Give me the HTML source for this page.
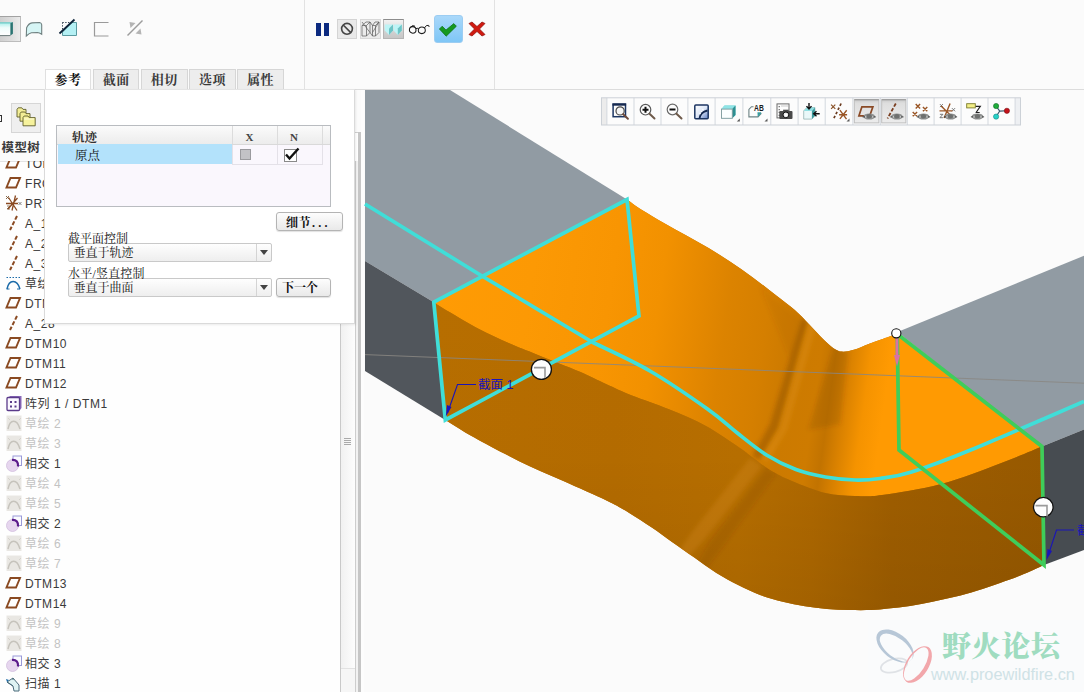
<!DOCTYPE html>
<html lang="zh-CN"><head><meta charset="utf-8"><title>扫描 - 参考</title>
<style>
html,body{margin:0;padding:0;}
body{width:1084px;height:692px;overflow:hidden;position:relative;background:#fbfbfb;font-family:"Liberation Sans","Noto Sans CJK SC",sans-serif;}
#page{position:absolute;left:0;top:0;width:1084px;height:692px;overflow:hidden;background:#fbfbfb;}
#scene{position:absolute;left:0;top:0;}
#topbar{position:absolute;left:0;top:0;width:1084px;height:89px;background:#fbfbfb;border-bottom:1px solid #dcdcdc;}
.vsep{position:absolute;top:0;width:1px;height:89px;background:#e2e2e2;}
.abs{position:absolute;}
/* left tree */
#left{position:absolute;left:0;top:90px;width:364px;height:602px;background:#fbfbfb;overflow:hidden;}
#treebg{position:absolute;left:0;top:71px;width:340px;height:531px;background:#fefefe;border-top:1px solid #e4e4e4;}
.tr{position:absolute;left:5px;height:20px;white-space:nowrap;font-size:12px;color:#3a3a3a;line-height:20px;}
.tr svg{position:absolute;left:0;top:1.5px;}
.tr span{position:absolute;left:20px;top:0;letter-spacing:0.55px;}
.tr.g{color:#c3c3c3;}
#left .tr{top:0;}
/* dashboard slide-down panel */
.tab{position:absolute;top:69px;height:20px;width:44.6px;background:#ededed;border:1px solid #d6d6d6;border-bottom:none;font-family:"Liberation Serif","Noto Serif CJK SC",serif;font-weight:bold;font-size:13px;line-height:20px;text-align:center;color:#3a3a3a;letter-spacing:0.5px;}
.tab.on{background:#fff;color:#111;border-color:#e0e0e0;height:21px;}
#panel{position:absolute;left:44px;top:89px;width:309px;height:233px;background:#fff;border:1px solid #dadada;border-top:1px solid #e4e4e4;box-shadow:1px 1px 2px rgba(0,0,0,0.08);font-family:"Liberation Serif","Noto Serif CJK SC",serif;font-size:12px;color:#111;}
#tbl{position:absolute;left:11px;top:35px;width:273px;height:80px;background:#faf7fd;border:1px solid #b9bcc0;}
#thead{position:absolute;left:0;top:0;width:273px;height:18px;background:linear-gradient(#fbfbfb,#ececec);border-bottom:1px solid #d9d9d9;}
.btn{position:absolute;border:1px solid #b4b4b4;border-radius:3px;background:linear-gradient(#fdfdfd,#e9e9e9);font-weight:bold;font-size:12px;text-align:center;box-shadow:0 1px 1px rgba(0,0,0,0.12);}
.dd{position:absolute;left:23px;width:202px;height:17px;border:1px solid #c9c9c9;border-radius:2px;background:linear-gradient(#fefefe,#eeeeee);font-size:12px;line-height:18px;}
.dd i{position:absolute;right:0;top:0;width:14px;height:17px;border-left:1px solid #d4d4d4;}
.dd i:after{content:"";position:absolute;left:3px;top:6px;border:4px solid transparent;border-top:5.5px solid #444;}
/* view toolbar */
#vtb{position:absolute;left:600.5px;top:96.5px;}
</style></head><body><div id="page">

<svg id="scene" width="1084" height="692" viewBox="0 0 1084 692">
<defs>
<linearGradient id="gTop" gradientUnits="userSpaceOnUse" x1="434" y1="302" x2="1049.8" y2="389.1">
<stop offset="0" stop-color="#ff9b04"/><stop offset="0.15" stop-color="#fc9904"/><stop offset="0.278" stop-color="#f89502"/><stop offset="0.358" stop-color="#f29100"/><stop offset="0.421" stop-color="#e68900"/>
<stop offset="0.469" stop-color="#dc8300"/><stop offset="0.533" stop-color="#d57f00"/><stop offset="0.58" stop-color="#cc7a00"/><stop offset="0.628" stop-color="#ce7b00"/><stop offset="0.652" stop-color="#c27300"/><stop offset="0.676" stop-color="#d98100"/><stop offset="0.708" stop-color="#f59300"/><stop offset="0.74" stop-color="#ff9a02"/><stop offset="1" stop-color="#ff9a02"/>
</linearGradient>
<filter id="blur2" x="-20%" y="-20%" width="140%" height="140%"><feGaussianBlur stdDeviation="2.2"/></filter>
<clipPath id="clipTop"><path d="M433.8,302.2L627.0,199.5C629.5,201.2 635.8,206.1 642.0,210.0 C648.2,213.9 656.9,219.0 664.3,223.2 C671.7,227.4 679.0,231.3 686.4,235.4 C693.8,239.5 701.2,243.6 708.6,248.0 C716.0,252.4 723.3,257.1 730.7,262.0 C738.1,266.9 745.4,272.0 752.8,277.4 C760.2,282.8 768.0,289.1 775.0,294.5 C782.0,299.9 789.0,305.0 794.8,310.0 C800.5,315.0 804.6,319.7 809.5,324.7 C814.4,329.7 819.9,336.0 824.3,340.2 C828.7,344.4 832.8,347.9 836.0,349.8 C839.2,351.7 840.5,351.7 843.5,351.7 C846.5,351.7 849.6,351.1 853.8,349.8 C858.0,348.5 863.7,345.8 868.6,343.9 C873.5,342.0 878.6,340.3 883.3,338.7 C887.9,337.1 894.3,334.8 896.5,334.0L900.0,336.0L1042.0,446.5C1035.0,449.3 1016.8,457.2 1000.0,463.5 C983.2,469.8 960.7,478.8 941.0,484.0 C921.3,489.2 896.3,493.0 882.0,495.0 C867.7,497.0 864.4,496.3 855.0,496.0 C845.6,495.7 836.0,495.5 825.5,493.0 C815.0,490.5 801.2,484.8 792.0,481.0 C782.8,477.2 776.7,474.0 770.0,470.0 C763.3,466.0 757.0,460.7 752.0,457.0 C747.0,453.3 747.7,453.2 740.0,448.0 C732.3,442.8 717.8,432.4 706.0,426.0 C694.2,419.6 681.3,414.4 669.0,409.3 C656.7,404.2 642.5,399.7 632.0,395.5 C621.5,391.3 614.7,387.9 606.0,384.0 C597.3,380.1 591.3,376.6 580.0,371.8 C568.7,367.0 549.9,359.8 538.0,355.0 C526.1,350.2 518.4,347.4 508.6,343.1 C498.8,338.8 488.9,334.3 479.0,329.1 C469.1,323.9 457.0,316.6 449.5,312.1 C442.0,307.6 436.4,303.9 433.8,302.2Z"/></clipPath>
<clipPath id="clipFront"><path d="M433.8,302.2C436.4,303.9 442.0,307.6 449.5,312.1 C457.0,316.6 469.1,323.9 479.0,329.1 C488.9,334.3 498.8,338.8 508.6,343.1 C518.4,347.4 526.1,350.2 538.0,355.0 C549.9,359.8 568.7,367.0 580.0,371.8 C591.3,376.6 597.3,380.1 606.0,384.0 C614.7,387.9 621.5,391.3 632.0,395.5 C642.5,399.7 656.7,404.2 669.0,409.3 C681.3,414.4 694.2,419.6 706.0,426.0 C717.8,432.4 732.3,442.8 740.0,448.0 C747.7,453.2 747.0,453.3 752.0,457.0 C757.0,460.7 763.3,466.0 770.0,470.0 C776.7,474.0 782.8,477.2 792.0,481.0 C801.2,484.8 815.0,490.5 825.5,493.0 C836.0,495.5 845.6,495.7 855.0,496.0 C864.4,496.3 867.7,497.0 882.0,495.0 C896.3,493.0 921.3,489.2 941.0,484.0 C960.7,478.8 983.2,469.8 1000.0,463.5 C1016.8,457.2 1035.0,449.3 1042.0,446.5L1044.0,565.0C1040.2,566.7 1028.3,572.3 1021.0,575.3 C1013.7,578.3 1007.4,580.4 1000.0,583.0 C992.6,585.6 984.3,588.5 976.8,590.8 C969.3,593.1 962.4,595.0 955.0,596.8 C947.6,598.6 940.0,600.3 932.5,601.8 C925.0,603.3 917.4,604.9 910.0,606.0 C902.6,607.1 894.7,607.8 888.3,608.5 C881.9,609.2 877.9,609.8 871.4,610.0 C864.9,610.2 856.6,610.2 849.2,610.0 C841.8,609.8 834.4,609.6 827.0,609.0 C819.6,608.4 812.4,607.5 805.0,606.3 C797.6,605.1 790.2,603.6 782.8,601.8 C775.4,599.9 768.1,598.0 760.7,595.2 C753.3,592.4 746.0,588.9 738.6,585.2 C731.2,581.5 723.8,577.6 716.4,573.0 C709.0,568.4 701.7,562.8 694.3,557.6 C686.9,552.4 679.1,547.0 672.0,542.0 C664.9,537.0 658.5,532.1 651.4,527.3 C644.3,522.4 636.6,517.3 629.2,512.9 C621.8,508.5 618.1,506.0 607.0,500.7 C595.9,495.4 577.5,487.4 562.8,480.8 C548.1,474.2 533.4,468.1 518.6,460.9 C503.9,453.7 486.5,444.4 474.3,437.6 C462.1,430.8 450.1,422.9 445.3,420.0Z"/></clipPath>
<linearGradient id="gFront" gradientUnits="userSpaceOnUse" x1="430" y1="0" x2="1045" y2="0">
<stop offset="0" stop-color="#b76e00"/><stop offset="0.30" stop-color="#b56c00"/><stop offset="0.50" stop-color="#b86f00"/><stop offset="0.62" stop-color="#b06900"/><stop offset="0.75" stop-color="#a15f00"/><stop offset="1" stop-color="#995a00"/>
</linearGradient>
<linearGradient id="gFrontV" gradientUnits="userSpaceOnUse" x1="0" y1="300" x2="0" y2="610">
<stop offset="0" stop-color="#000" stop-opacity="0"/><stop offset="0.5" stop-color="#000" stop-opacity="0.01"/><stop offset="1" stop-color="#000" stop-opacity="0.08"/>
</linearGradient>
</defs>
<!-- grey block, left -->
<path d="M365,90 L450,90 L627,199.5 L433.8,302.2 L365,261 Z" fill="#919ba3"/>
<path d="M365,261 L433.8,302.2 L445.3,420 L365,371 Z" fill="#51565c"/>
<!-- grey block, right -->
<path d="M897.5,332 L1084,255.8 L1084,429.5 L1042,446.5 Z" fill="#919ba3"/>
<path d="M1042,446.5 L1084,429.5 L1084,550 L1044,565 Z" fill="#474c51"/>
<!-- swept body -->
<path d="M433.8,302.2L627.0,199.5C629.5,201.2 635.8,206.1 642.0,210.0 C648.2,213.9 656.9,219.0 664.3,223.2 C671.7,227.4 679.0,231.3 686.4,235.4 C693.8,239.5 701.2,243.6 708.6,248.0 C716.0,252.4 723.3,257.1 730.7,262.0 C738.1,266.9 745.4,272.0 752.8,277.4 C760.2,282.8 768.0,289.1 775.0,294.5 C782.0,299.9 789.0,305.0 794.8,310.0 C800.5,315.0 804.6,319.7 809.5,324.7 C814.4,329.7 819.9,336.0 824.3,340.2 C828.7,344.4 832.8,347.9 836.0,349.8 C839.2,351.7 840.5,351.7 843.5,351.7 C846.5,351.7 849.6,351.1 853.8,349.8 C858.0,348.5 863.7,345.8 868.6,343.9 C873.5,342.0 878.6,340.3 883.3,338.7 C887.9,337.1 894.3,334.8 896.5,334.0L900.0,336.0L1042.0,446.5L1044.0,565.0C1040.2,566.7 1028.3,572.3 1021.0,575.3 C1013.7,578.3 1007.4,580.4 1000.0,583.0 C992.6,585.6 984.3,588.5 976.8,590.8 C969.3,593.1 962.4,595.0 955.0,596.8 C947.6,598.6 940.0,600.3 932.5,601.8 C925.0,603.3 917.4,604.9 910.0,606.0 C902.6,607.1 894.7,607.8 888.3,608.5 C881.9,609.2 877.9,609.8 871.4,610.0 C864.9,610.2 856.6,610.2 849.2,610.0 C841.8,609.8 834.4,609.6 827.0,609.0 C819.6,608.4 812.4,607.5 805.0,606.3 C797.6,605.1 790.2,603.6 782.8,601.8 C775.4,599.9 768.1,598.0 760.7,595.2 C753.3,592.4 746.0,588.9 738.6,585.2 C731.2,581.5 723.8,577.6 716.4,573.0 C709.0,568.4 701.7,562.8 694.3,557.6 C686.9,552.4 679.1,547.0 672.0,542.0 C664.9,537.0 658.5,532.1 651.4,527.3 C644.3,522.4 636.6,517.3 629.2,512.9 C621.8,508.5 618.1,506.0 607.0,500.7 C595.9,495.4 577.5,487.4 562.8,480.8 C548.1,474.2 533.4,468.1 518.6,460.9 C503.9,453.7 486.5,444.4 474.3,437.6 C462.1,430.8 450.1,422.9 445.3,420.0Z" fill="#c47400"/>
<path d="M433.8,302.2L627.0,199.5C629.5,201.2 635.8,206.1 642.0,210.0 C648.2,213.9 656.9,219.0 664.3,223.2 C671.7,227.4 679.0,231.3 686.4,235.4 C693.8,239.5 701.2,243.6 708.6,248.0 C716.0,252.4 723.3,257.1 730.7,262.0 C738.1,266.9 745.4,272.0 752.8,277.4 C760.2,282.8 768.0,289.1 775.0,294.5 C782.0,299.9 789.0,305.0 794.8,310.0 C800.5,315.0 804.6,319.7 809.5,324.7 C814.4,329.7 819.9,336.0 824.3,340.2 C828.7,344.4 832.8,347.9 836.0,349.8 C839.2,351.7 840.5,351.7 843.5,351.7 C846.5,351.7 849.6,351.1 853.8,349.8 C858.0,348.5 863.7,345.8 868.6,343.9 C873.5,342.0 878.6,340.3 883.3,338.7 C887.9,337.1 894.3,334.8 896.5,334.0L900.0,336.0L1042.0,446.5C1035.0,449.3 1016.8,457.2 1000.0,463.5 C983.2,469.8 960.7,478.8 941.0,484.0 C921.3,489.2 896.3,493.0 882.0,495.0 C867.7,497.0 864.4,496.3 855.0,496.0 C845.6,495.7 836.0,495.5 825.5,493.0 C815.0,490.5 801.2,484.8 792.0,481.0 C782.8,477.2 776.7,474.0 770.0,470.0 C763.3,466.0 757.0,460.7 752.0,457.0 C747.0,453.3 747.7,453.2 740.0,448.0 C732.3,442.8 717.8,432.4 706.0,426.0 C694.2,419.6 681.3,414.4 669.0,409.3 C656.7,404.2 642.5,399.7 632.0,395.5 C621.5,391.3 614.7,387.9 606.0,384.0 C597.3,380.1 591.3,376.6 580.0,371.8 C568.7,367.0 549.9,359.8 538.0,355.0 C526.1,350.2 518.4,347.4 508.6,343.1 C498.8,338.8 488.9,334.3 479.0,329.1 C469.1,323.9 457.0,316.6 449.5,312.1 C442.0,307.6 436.4,303.9 433.8,302.2Z" fill="url(#gTop)"/>
<path d="M433.8,302.2C436.4,303.9 442.0,307.6 449.5,312.1 C457.0,316.6 469.1,323.9 479.0,329.1 C488.9,334.3 498.8,338.8 508.6,343.1 C518.4,347.4 526.1,350.2 538.0,355.0 C549.9,359.8 568.7,367.0 580.0,371.8 C591.3,376.6 597.3,380.1 606.0,384.0 C614.7,387.9 621.5,391.3 632.0,395.5 C642.5,399.7 656.7,404.2 669.0,409.3 C681.3,414.4 694.2,419.6 706.0,426.0 C717.8,432.4 732.3,442.8 740.0,448.0 C747.7,453.2 747.0,453.3 752.0,457.0 C757.0,460.7 763.3,466.0 770.0,470.0 C776.7,474.0 782.8,477.2 792.0,481.0 C801.2,484.8 815.0,490.5 825.5,493.0 C836.0,495.5 845.6,495.7 855.0,496.0 C864.4,496.3 867.7,497.0 882.0,495.0 C896.3,493.0 921.3,489.2 941.0,484.0 C960.7,478.8 983.2,469.8 1000.0,463.5 C1016.8,457.2 1035.0,449.3 1042.0,446.5L1044.0,565.0C1040.2,566.7 1028.3,572.3 1021.0,575.3 C1013.7,578.3 1007.4,580.4 1000.0,583.0 C992.6,585.6 984.3,588.5 976.8,590.8 C969.3,593.1 962.4,595.0 955.0,596.8 C947.6,598.6 940.0,600.3 932.5,601.8 C925.0,603.3 917.4,604.9 910.0,606.0 C902.6,607.1 894.7,607.8 888.3,608.5 C881.9,609.2 877.9,609.8 871.4,610.0 C864.9,610.2 856.6,610.2 849.2,610.0 C841.8,609.8 834.4,609.6 827.0,609.0 C819.6,608.4 812.4,607.5 805.0,606.3 C797.6,605.1 790.2,603.6 782.8,601.8 C775.4,599.9 768.1,598.0 760.7,595.2 C753.3,592.4 746.0,588.9 738.6,585.2 C731.2,581.5 723.8,577.6 716.4,573.0 C709.0,568.4 701.7,562.8 694.3,557.6 C686.9,552.4 679.1,547.0 672.0,542.0 C664.9,537.0 658.5,532.1 651.4,527.3 C644.3,522.4 636.6,517.3 629.2,512.9 C621.8,508.5 618.1,506.0 607.0,500.7 C595.9,495.4 577.5,487.4 562.8,480.8 C548.1,474.2 533.4,468.1 518.6,460.9 C503.9,453.7 486.5,444.4 474.3,437.6 C462.1,430.8 450.1,422.9 445.3,420.0Z" fill="url(#gFront)"/>
<path d="M433.8,302.2C436.4,303.9 442.0,307.6 449.5,312.1 C457.0,316.6 469.1,323.9 479.0,329.1 C488.9,334.3 498.8,338.8 508.6,343.1 C518.4,347.4 526.1,350.2 538.0,355.0 C549.9,359.8 568.7,367.0 580.0,371.8 C591.3,376.6 597.3,380.1 606.0,384.0 C614.7,387.9 621.5,391.3 632.0,395.5 C642.5,399.7 656.7,404.2 669.0,409.3 C681.3,414.4 694.2,419.6 706.0,426.0 C717.8,432.4 732.3,442.8 740.0,448.0 C747.7,453.2 747.0,453.3 752.0,457.0 C757.0,460.7 763.3,466.0 770.0,470.0 C776.7,474.0 782.8,477.2 792.0,481.0 C801.2,484.8 815.0,490.5 825.5,493.0 C836.0,495.5 845.6,495.7 855.0,496.0 C864.4,496.3 867.7,497.0 882.0,495.0 C896.3,493.0 921.3,489.2 941.0,484.0 C960.7,478.8 983.2,469.8 1000.0,463.5 C1016.8,457.2 1035.0,449.3 1042.0,446.5L1044.0,565.0C1040.2,566.7 1028.3,572.3 1021.0,575.3 C1013.7,578.3 1007.4,580.4 1000.0,583.0 C992.6,585.6 984.3,588.5 976.8,590.8 C969.3,593.1 962.4,595.0 955.0,596.8 C947.6,598.6 940.0,600.3 932.5,601.8 C925.0,603.3 917.4,604.9 910.0,606.0 C902.6,607.1 894.7,607.8 888.3,608.5 C881.9,609.2 877.9,609.8 871.4,610.0 C864.9,610.2 856.6,610.2 849.2,610.0 C841.8,609.8 834.4,609.6 827.0,609.0 C819.6,608.4 812.4,607.5 805.0,606.3 C797.6,605.1 790.2,603.6 782.8,601.8 C775.4,599.9 768.1,598.0 760.7,595.2 C753.3,592.4 746.0,588.9 738.6,585.2 C731.2,581.5 723.8,577.6 716.4,573.0 C709.0,568.4 701.7,562.8 694.3,557.6 C686.9,552.4 679.1,547.0 672.0,542.0 C664.9,537.0 658.5,532.1 651.4,527.3 C644.3,522.4 636.6,517.3 629.2,512.9 C621.8,508.5 618.1,506.0 607.0,500.7 C595.9,495.4 577.5,487.4 562.8,480.8 C548.1,474.2 533.4,468.1 518.6,460.9 C503.9,453.7 486.5,444.4 474.3,437.6 C462.1,430.8 450.1,422.9 445.3,420.0Z" fill="url(#gFrontV)"/>
<!-- crease shading -->
<g clip-path="url(#clipTop)"><g filter="url(#blur2)">
<path d="M802,318 L808,321 L778,428 L760,460 L752,456 L770,424 Z" fill="#6a3800" opacity="0.30"/>
<path d="M810,322 L816,326 L787,430 L768,462 L762,459 L780,428 Z" fill="#ffb648" opacity="0.14"/>
<path d="M834,346 L848,352 L840,424 L808,430 Z" fill="#6a3800" opacity="0.17"/>
<path d="M760,286 L800,318 L806,324 L790,360 Z" fill="#7a4200" opacity="0.08"/>
</g></g>
<g clip-path="url(#clipFront)"><g filter="url(#blur2)">
<path d="M750,458 L762,466 L704,540 L686,560 L678,552 L692,532 Z" fill="#ffb040" opacity="0.15"/>
<path d="M766,468 L776,474 L722,548 L704,572 L696,566 L710,542 Z" fill="#5a3000" opacity="0.13"/>
</g></g>
<!-- axis line -->
<path d="M365,354.6 L1084,383.2" stroke="#8a8782" stroke-width="1" fill="none" opacity="0.85"/>
<!-- trajectory & section 1 -->
<path d="M365.0,204.0L482.0,276.0L593.0,342.5C602.5,347.2 630.9,359.9 650.0,371.0 C669.1,382.1 693.0,398.7 707.5,409.0 C722.0,419.3 727.2,425.1 737.0,432.8 C746.8,440.5 756.7,448.9 766.5,455.0 C776.3,461.1 786.2,465.9 796.0,469.6 C805.8,473.3 815.7,475.3 825.5,477.0 C835.3,478.7 845.9,479.8 855.0,480.0 C864.1,480.2 870.6,479.8 880.0,478.5 C889.4,477.2 896.5,476.8 911.6,472.0 C926.7,467.2 941.9,461.8 970.6,450.0 C999.3,438.2 1065.1,409.6 1084.0,401.5" stroke="#40ded8" stroke-width="3.7" fill="none" stroke-linejoin="round"/>
<path d="M433.8,302.2L627.0,199.5L639.0,316.0L445.3,420.0Z" stroke="#40ded8" stroke-width="3.7" fill="none" stroke-linejoin="miter"/>
<!-- section 2 (green) -->
<path d="M897.3,338 L899,450 L1044,565 L1042,446.5 L899.8,336" stroke="#3fcd5a" stroke-width="3.7" fill="none" stroke-linejoin="miter"/>
<!-- start arrow -->
<path d="M897,338 L897,358" stroke="#d772a6" stroke-width="2.8" fill="none"/>
<path d="M894,355 L900,355 L897,366.5 Z" fill="#d772a6"/>
<circle cx="896.3" cy="333.3" r="4.6" fill="#fff" stroke="#111" stroke-width="1.1"/>
<!-- drag handles -->
<g><circle cx="541.4" cy="369.4" r="10" fill="#fdfdfd" stroke="#111" stroke-width="1.3"/><path d="M534,367.6 H545 V378" stroke="#9a9a9a" stroke-width="1.6" fill="none"/></g>
<g><circle cx="1043.3" cy="507.1" r="9.8" fill="#fdfdfd" stroke="#111" stroke-width="1.3"/><path d="M1035.5,505.6 H1047 V516.5" stroke="#9a9a9a" stroke-width="1.6" fill="none"/></g>
<!-- labels -->
<path d="M476,384.5 H457.5 L447.5,413" stroke="#1a14b8" stroke-width="1.1" fill="none"/>
<path d="M445.8,416.5 L447,405 L451.5,407 Z" fill="#1a14b8"/>
<text x="478" y="389" font-family="'Liberation Sans','Noto Sans CJK SC',sans-serif" font-size="12.5" fill="#1a14b8">截面 1</text>
<path d="M1074,530 H1056.5 L1048,556" stroke="#1a14b8" stroke-width="1.1" fill="none"/>
<path d="M1046.5,560 L1047.5,549 L1052,551 Z" fill="#1a14b8"/>
<text x="1077" y="535" font-family="'Liberation Sans','Noto Sans CJK SC',sans-serif" font-size="12.5" fill="#1a14b8">截面 2</text>
</svg>


<!-- ============ left model tree ============ -->
<div id="left">
 
 <div class="abs" style="left:-5px;top:25px;width:5px;height:5px;border:1.5px solid #333;"></div>
 <div class="abs" style="left:10.6px;top:13.3px;width:28.6px;height:27.5px;background:#efefef;border:1px solid #d6d6d6;"></div>
 <svg class="abs" style="left:14px;top:16px" width="24" height="24" viewBox="0 0 24 24">
  <path d="M3,3.4 l1.2,-1.6 h3.6 l1.2,1.6 h3 v7.6 h-9 Z" fill="#f3ee96" stroke="#5e5c2a" stroke-width="0.9"/>
  <path d="M6,7.6 l1.2,-1.6 h3.6 l1.2,1.6 h4 v7.6 h-10 Z" fill="#f3ee96" stroke="#5e5c2a" stroke-width="0.9"/>
  <path d="M9,11.6 l1.2,-1.6 h3.8 l1.2,1.6 h6 v8.2 h-12.2 Z" fill="#f6f29c" stroke="#5e5c2a" stroke-width="0.9"/>
  <path d="M10,13 h10" stroke="#fffff0" stroke-width="0.8"/>
 </svg>
 <div class="abs" style="left:1.5px;top:47.5px;font-family:'Liberation Sans','Noto Sans CJK SC',sans-serif;font-weight:700;font-size:12.5px;color:#3c3c3c;letter-spacing:0.4px;line-height:20px;">模型树</div>
 <div id="treebg"></div>
 <div class="abs" style="left:0;top:71px;width:340px;height:531px;overflow:hidden;"><div class="tr" style="top:-7.5px"><svg width="17" height="17" viewBox="0 0 17 17"><path d="M5.5,3 H15 L11,12.5 H1.5 Z" fill="none" stroke="#8a4a22" stroke-width="1.9"/></svg><span>TOP</span></div>
<div class="tr" style="top:12.5px"><svg width="17" height="17" viewBox="0 0 17 17"><path d="M5.5,3 H15 L11,12.5 H1.5 Z" fill="none" stroke="#8a4a22" stroke-width="1.9"/></svg><span>FRONT</span></div>
<div class="tr" style="top:32.5px"><svg width="17" height="17" viewBox="0 0 17 17"><path d="M1,1 l3,3 m0,-3 l-3,3" stroke="#7a5a3a" stroke-width="0.9"/><path d="M2,11 h3 l-3,3 h3" stroke="#7a5a3a" stroke-width="0.8" fill="none"/><path d="M10.5,0.5 L7,15.5 M1,8.5 H13 M3.5,2.5 L12,15.5 M12.5,3 L3,14" stroke="#8a4a22" stroke-width="1.3"/><path d="M13.5,7 l3,3 m0,-3 l-3,3" stroke="#777" stroke-width="0.9"/></svg><span>PRT_CSYS_DEF</span></div>
<div class="tr" style="top:52.5px"><svg width="17" height="17" viewBox="0 0 17 17"><path d="M12,1 L5,15" stroke="#8a4a22" stroke-width="2" stroke-dasharray="4 2"/></svg><span>A_1</span></div>
<div class="tr" style="top:72.5px"><svg width="17" height="17" viewBox="0 0 17 17"><path d="M12,1 L5,15" stroke="#8a4a22" stroke-width="2" stroke-dasharray="4 2"/></svg><span>A_2</span></div>
<div class="tr" style="top:92.5px"><svg width="17" height="17" viewBox="0 0 17 17"><path d="M12,1 L5,15" stroke="#8a4a22" stroke-width="2" stroke-dasharray="4 2"/></svg><span>A_3</span></div>
<div class="tr" style="top:112.5px"><svg width="17" height="17" viewBox="0 0 17 17"><path d="M1.5,2.5 H15" stroke="#1a6aa8" stroke-width="1.2" stroke-dasharray="1.5 1.5"/><path d="M2,14 C4,4 12,4 15,14" stroke="#1a6aa8" stroke-width="1.5" fill="none"/><path d="M1.5,14 h3 M12,14 h3" stroke="#1a6aa8" stroke-width="1"/></svg><span>草绘 1</span></div>
<div class="tr" style="top:132.5px"><svg width="17" height="17" viewBox="0 0 17 17"><path d="M5.5,3 H15 L11,12.5 H1.5 Z" fill="none" stroke="#8a4a22" stroke-width="1.9"/></svg><span>DTM1</span></div>
<div class="tr" style="top:152.5px"><svg width="17" height="17" viewBox="0 0 17 17"><path d="M12,1 L5,15" stroke="#8a4a22" stroke-width="2" stroke-dasharray="4 2"/></svg><span>A_28</span></div>
<div class="tr" style="top:172.5px"><svg width="17" height="17" viewBox="0 0 17 17"><path d="M5.5,3 H15 L11,12.5 H1.5 Z" fill="none" stroke="#8a4a22" stroke-width="1.9"/></svg><span>DTM10</span></div>
<div class="tr" style="top:192.5px"><svg width="17" height="17" viewBox="0 0 17 17"><path d="M5.5,3 H15 L11,12.5 H1.5 Z" fill="none" stroke="#8a4a22" stroke-width="1.9"/></svg><span>DTM11</span></div>
<div class="tr" style="top:212.5px"><svg width="17" height="17" viewBox="0 0 17 17"><path d="M5.5,3 H15 L11,12.5 H1.5 Z" fill="none" stroke="#8a4a22" stroke-width="1.9"/></svg><span>DTM12</span></div>
<div class="tr" style="top:232.5px"><svg width="17" height="17" viewBox="0 0 17 17"><path d="M3,3 L5,1 H16.5 V13 L14.5,15.5 Z" fill="#8a6ab8"/><rect x="2" y="2.5" width="12.5" height="13" rx="1" fill="#fbf8ff" stroke="#5a3a8a" stroke-width="1.3"/><path d="M5,6 h2 v2 h-2 Z M9.5,6 h2 v2 h-2 Z M5,10.5 h2 v2 h-2 Z M9.5,10.5 h2 v2 h-2 Z" fill="#5a3a8a"/></svg><span>阵列 1 / DTM1</span></div>
<div class="tr g" style="top:252.5px"><svg width="17" height="17" viewBox="0 0 17 17"><rect x="1.5" y="0.5" width="15" height="15.5" fill="#e9e7e3"/><path d="M3,3 l2,2 M16,3 l-2,2" stroke="#d6d3cd" stroke-width="1"/><path d="M3,14 C5,3.5 12,3.5 15,14" stroke="#c6c3bc" stroke-width="1.5" fill="none"/></svg><span>草绘 2</span></div>
<div class="tr g" style="top:272.5px"><svg width="17" height="17" viewBox="0 0 17 17"><rect x="1.5" y="0.5" width="15" height="15.5" fill="#e9e7e3"/><path d="M3,3 l2,2 M16,3 l-2,2" stroke="#d6d3cd" stroke-width="1"/><path d="M3,14 C5,3.5 12,3.5 15,14" stroke="#c6c3bc" stroke-width="1.5" fill="none"/></svg><span>草绘 3</span></div>
<div class="tr" style="top:292.5px"><svg width="17" height="17" viewBox="0 0 17 17"><rect x="8" y="1" width="8.5" height="9.5" fill="#fbfbff" stroke="#9a9ad8" stroke-width="1"/><circle cx="7.5" cy="10.5" r="6" fill="#e6d6ee" stroke="#d2bede" stroke-width="0.8"/><path d="M7,4.8 C11.5,4.5 13.5,7.5 13,11.5" stroke="#5a1a8a" stroke-width="2.2" fill="none"/></svg><span>相交 1</span></div>
<div class="tr g" style="top:312.5px"><svg width="17" height="17" viewBox="0 0 17 17"><rect x="1.5" y="0.5" width="15" height="15.5" fill="#e9e7e3"/><path d="M3,3 l2,2 M16,3 l-2,2" stroke="#d6d3cd" stroke-width="1"/><path d="M3,14 C5,3.5 12,3.5 15,14" stroke="#c6c3bc" stroke-width="1.5" fill="none"/></svg><span>草绘 4</span></div>
<div class="tr g" style="top:332.5px"><svg width="17" height="17" viewBox="0 0 17 17"><rect x="1.5" y="0.5" width="15" height="15.5" fill="#e9e7e3"/><path d="M3,3 l2,2 M16,3 l-2,2" stroke="#d6d3cd" stroke-width="1"/><path d="M3,14 C5,3.5 12,3.5 15,14" stroke="#c6c3bc" stroke-width="1.5" fill="none"/></svg><span>草绘 5</span></div>
<div class="tr" style="top:352.5px"><svg width="17" height="17" viewBox="0 0 17 17"><rect x="8" y="1" width="8.5" height="9.5" fill="#fbfbff" stroke="#9a9ad8" stroke-width="1"/><circle cx="7.5" cy="10.5" r="6" fill="#e6d6ee" stroke="#d2bede" stroke-width="0.8"/><path d="M7,4.8 C11.5,4.5 13.5,7.5 13,11.5" stroke="#5a1a8a" stroke-width="2.2" fill="none"/></svg><span>相交 2</span></div>
<div class="tr g" style="top:372.5px"><svg width="17" height="17" viewBox="0 0 17 17"><rect x="1.5" y="0.5" width="15" height="15.5" fill="#e9e7e3"/><path d="M3,3 l2,2 M16,3 l-2,2" stroke="#d6d3cd" stroke-width="1"/><path d="M3,14 C5,3.5 12,3.5 15,14" stroke="#c6c3bc" stroke-width="1.5" fill="none"/></svg><span>草绘 6</span></div>
<div class="tr g" style="top:392.5px"><svg width="17" height="17" viewBox="0 0 17 17"><rect x="1.5" y="0.5" width="15" height="15.5" fill="#e9e7e3"/><path d="M3,3 l2,2 M16,3 l-2,2" stroke="#d6d3cd" stroke-width="1"/><path d="M3,14 C5,3.5 12,3.5 15,14" stroke="#c6c3bc" stroke-width="1.5" fill="none"/></svg><span>草绘 7</span></div>
<div class="tr" style="top:412.5px"><svg width="17" height="17" viewBox="0 0 17 17"><path d="M5.5,3 H15 L11,12.5 H1.5 Z" fill="none" stroke="#8a4a22" stroke-width="1.9"/></svg><span>DTM13</span></div>
<div class="tr" style="top:432.5px"><svg width="17" height="17" viewBox="0 0 17 17"><path d="M5.5,3 H15 L11,12.5 H1.5 Z" fill="none" stroke="#8a4a22" stroke-width="1.9"/></svg><span>DTM14</span></div>
<div class="tr g" style="top:452.5px"><svg width="17" height="17" viewBox="0 0 17 17"><rect x="1.5" y="0.5" width="15" height="15.5" fill="#e9e7e3"/><path d="M3,3 l2,2 M16,3 l-2,2" stroke="#d6d3cd" stroke-width="1"/><path d="M3,14 C5,3.5 12,3.5 15,14" stroke="#c6c3bc" stroke-width="1.5" fill="none"/></svg><span>草绘 9</span></div>
<div class="tr g" style="top:472.5px"><svg width="17" height="17" viewBox="0 0 17 17"><rect x="1.5" y="0.5" width="15" height="15.5" fill="#e9e7e3"/><path d="M3,3 l2,2 M16,3 l-2,2" stroke="#d6d3cd" stroke-width="1"/><path d="M3,14 C5,3.5 12,3.5 15,14" stroke="#c6c3bc" stroke-width="1.5" fill="none"/></svg><span>草绘 8</span></div>
<div class="tr" style="top:492.5px"><svg width="17" height="17" viewBox="0 0 17 17"><rect x="8" y="1" width="8.5" height="9.5" fill="#fbfbff" stroke="#9a9ad8" stroke-width="1"/><circle cx="7.5" cy="10.5" r="6" fill="#e6d6ee" stroke="#d2bede" stroke-width="0.8"/><path d="M7,4.8 C11.5,4.5 13.5,7.5 13,11.5" stroke="#5a1a8a" stroke-width="2.2" fill="none"/></svg><span>相交 3</span></div>
<div class="tr" style="top:512.5px"><svg width="17" height="17" viewBox="0 0 17 17"><path d="M2,7 L8,3 L14,10 L14,16 L9,16 L8,11 Z" fill="#dff3f3" stroke="#4a6a7a" stroke-width="1"/><path d="M2,7 L8,11 M8,3 L8,5" stroke="#4a6a7a" stroke-width="1"/><path d="M1,4 l3,1 l-2,2 Z" fill="#1a6aa8"/></svg><span>扫描 1</span></div></div>
 <!-- scrollbar + splitter -->
 <div class="abs" style="left:339.5px;top:232px;width:14px;height:370px;background:linear-gradient(90deg,#f1f1f1,#fdfdfd);border-left:1.5px solid #c9c9c9;"></div>
 <div class="abs" style="left:344px;top:348px;width:7px;height:1px;background:#aaa;box-shadow:0 2px 0 #aaa,0 4px 0 #aaa,0 6px 0 #aaa;"></div>
 <div class="abs" style="left:341px;top:578px;width:14px;height:24px;background:#f6f6f6;border-top:1px solid #e2e2e2;"></div>
 <div class="abs" style="left:354px;top:42px;width:4px;height:29px;background:#fff;border-top:1px solid #cfcfcf;border-left:1px solid #d4d4d4;"></div>
 <div class="abs" style="left:358px;top:42px;width:2.6px;height:560px;background:#c6c6c6;"></div>
 <div class="abs" style="left:355px;top:71px;width:1.4px;height:531px;background:#cdcdcd;"></div>
 <div class="abs" style="left:356px;top:71px;width:2px;height:531px;background:#f2f2f2;"></div>
 <div class="abs" style="left:361px;top:0;width:3px;height:602px;background:#fdfdfd;"></div>
</div>

<!-- ============ dashboard ============ -->
<div id="topbar">
 <div class="vsep" style="left:304px"></div><div class="vsep" style="left:494px"></div>
 <!-- sweep type icons -->
 <div class="abs" style="left:-2px;top:15.5px;width:20.5px;height:24.5px;background:linear-gradient(90deg,#cdcdcd,#dcdcdc 55%,#ebebeb);border:1px solid #bcbcbc;border-top:1.6px solid #a2a2a2;border-right:1.5px solid #bdbdbd;"></div>
 <svg class="abs" style="left:0;top:14px" width="150" height="30" viewBox="0 14 150 30">
  <defs><linearGradient id="gBox" x1="0" y1="0" x2="0" y2="1"><stop offset="0" stop-color="#a8eeea"/><stop offset="0.4" stop-color="#effcfb"/><stop offset="1" stop-color="#ffffff"/></linearGradient></defs>
  <path d="M-2,22.6 H10.4 V35.4 H-2 Z" fill="url(#gBox)"/><path d="M-2,22.2 H12.8 L10.4,23.4 H-2 Z" fill="#6ecac6"/><path d="M10.4,23.2 L12.9,22 V33.8 L10.4,35.6 Z" fill="#2a7472"/><path d="M-2,35.6 H10.4" stroke="#6a7a7a" stroke-width="1"/>
  <path d="M26.3,36 L26.6,27.8 C28,24.5 30,23.2 32,22.9 L39.6,22.5 C41,22.8 41.6,23.6 41.7,24.8 V34.3 C40,33.2 38.8,32.7 37.4,32.5 L31.4,32.8 C29.4,33.4 27.8,34.6 26.3,36 Z" fill="#d6f5f5" stroke="#6f8080" stroke-width="1.1"/>
  <path d="M62.5,22.5 H70" stroke="#234" stroke-width="1" stroke-dasharray="1.2 1.6"/><path d="M62.5,22.5 V30" stroke="#234" stroke-width="1" stroke-dasharray="1.2 1.6"/>
  <path d="M62.5,35.5 V32 L72,22.5 H76.5 V35.5 Z" fill="#b4f0f4" stroke="#5a9aa0" stroke-width="1"/><path d="M59.5,33.5 L74.5,19.5" stroke="#0c2238" stroke-width="1.8"/>
  <path d="M108.5,22.5 H94.5 V36 H108.5" fill="none" stroke="#9a9a9a" stroke-width="1.2"/>
  <path d="M127.5,35.5 L142.5,20.5" stroke="#9c9c9c" stroke-width="1.4"/><path d="M129.5,22 l6,1 l-5,5 Z M141.5,34.5 l-6,-1 l5,-5 Z" fill="#b4b4b4"/>
 </svg>
 <!-- pause / preview / ok / cancel -->
 <div class="abs" style="left:316px;top:22.5px;width:5px;height:13px;background:#0c2a80;"></div>
 <div class="abs" style="left:323.5px;top:22.5px;width:5px;height:13px;background:#0c2a80;"></div>
 <div class="abs" style="left:337px;top:19px;width:18px;height:18px;background:#e9e9e9;border:1px solid #d4d4d4;"></div>
 <svg class="abs" style="left:337px;top:19px" width="20" height="21" viewBox="0 0 20 21"><circle cx="10" cy="9.8" r="5.4" fill="none" stroke="#444" stroke-width="1.6"/><path d="M6.2,6 L13.8,13.6" stroke="#444" stroke-width="1.6"/></svg>
 <div class="abs" style="left:360px;top:19px;width:18.5px;height:18px;background:#ebebeb;border:1px solid #d8d8d8;"></div>
 <svg class="abs" style="left:360px;top:19px" width="21" height="21" viewBox="0 0 21 21"><path d="M2,6.5 L6,3 H10 L12.5,6.5 L15,3 H19 V13.5 L15.5,17 H12.5 L10,13.5 L6.5,17 H2 Z M2,6.5 H6.5 V17 M6.5,6.5 L10,3 V13.5 M12.5,6.5 V17 M12.5,6.5 H15.5 V17 M15.5,6.5 L19,3 M2,3 L10,13.5 M19,3 L12.5,13.5" fill="none" stroke="#5a5a5a" stroke-width="0.7"/></svg>
 <div class="abs" style="left:383px;top:19px;width:18.5px;height:17.5px;background:linear-gradient(#f2f2f2,#e6e6e6 25%,#cfcfcf 70%,#c6c6c6);border:1px solid #b4b4b4;border-top:1.6px solid #8c8c8c;"></div>
 <svg class="abs" style="left:383px;top:19px" width="21" height="21" viewBox="0 0 21 21"><path d="M1.8,5.5 H10 V11.5 L6,16 L1.8,11.5 Z" fill="#bdf4f6"/><path d="M6,9.5 L10,5.5 V11.5 L6,16 Z" fill="#6cc4c6"/><path d="M10.6,5.5 H18.8 V11.5 L14.8,16 L10.6,11.5 Z" fill="#bdf4f6"/><path d="M14.8,9.5 L18.8,5.5 V11.5 L14.8,16 Z" fill="#6cc4c6"/></svg>
 <svg class="abs" style="left:407px;top:22px" width="24" height="16" viewBox="0 0 24 16"><ellipse cx="5.7" cy="7.9" rx="3.3" ry="3.3" fill="none" stroke="#1c1c1c" stroke-width="1.05"/><ellipse cx="14.8" cy="8.3" rx="3.5" ry="3.3" fill="none" stroke="#1c1c1c" stroke-width="1.05"/><path d="M8.8,6.8 q1.3,-1.2 2.7,0 M3.4,5.4 q2,-3 4.6,-1.2 M17.4,6 q2,-3.6 4.2,-2.6 q0.9,0.6 0.2,1.6" stroke="#1c1c1c" stroke-width="1" fill="none"/></svg>
 <div class="abs" style="left:434px;top:15px;width:27px;height:26px;border-radius:3px;background:linear-gradient(#a9d8fa,#7fc6f6);border:1px solid #9ccdf2;"></div>
 <svg class="abs" style="left:434px;top:15px" width="29" height="28" viewBox="0 0 29 28"><path d="M5.4,14 L8.2,11.2 L12,15 L19.8,8.6 L22.4,11.2 L12.2,21.2 Z" fill="#15991f" stroke="#0b6c15" stroke-width="0.7"/></svg>
 <svg class="abs" style="left:467px;top:20px" width="20" height="18" viewBox="0 0 20 18"><path d="M2,3.5 L5,2 L10,6.5 L15,2 L18,3.5 L12.5,9 L18,14.5 L15,16 L10,11.5 L5,16 L2,14.5 L7.5,9 Z" fill="#d01a10" stroke="#8a0a06" stroke-width="0.7"/></svg>
 <!-- tabs -->
 <div class="tab on" style="left:44.6px">参考</div>
 <div class="tab" style="left:92.9px">截面</div>
 <div class="tab" style="left:141px">相切</div>
 <div class="tab" style="left:189.1px">选项</div>
 <div class="tab" style="left:237.1px">属性</div>
</div>

<div id="panel">
 <div id="tbl">
  <div id="thead">
   <span class="abs" style="left:15px;top:3px;line-height:19px;font-weight:bold;font-size:12.5px;color:#333;">轨迹</span>
   <span class="abs" style="left:174.5px;top:0;width:34px;padding-right:10px;height:18px;line-height:23px;text-align:center;font-weight:bold;font-size:11px;border-left:1px solid #dcdcdc;color:#444;font-family:'Liberation Serif',serif;">X</span>
   <span class="abs" style="left:219.5px;top:0;width:33px;padding-right:11px;height:18px;line-height:23px;text-align:center;font-weight:bold;font-size:11px;border-left:1px solid #dcdcdc;border-right:1px solid #dcdcdc;color:#444;font-family:'Liberation Serif',serif;">N</span>
  </div>
  <div class="abs" style="left:1px;top:18px;width:173.5px;height:20px;background:#b3e2fb;"></div>
  <span class="abs" style="left:18px;top:21px;line-height:19px;font-size:12.5px;">原点</span>
  <div class="abs" style="left:174.5px;top:19px;width:44px;height:19px;border-left:1px solid #e4e1e8;border-bottom:1px solid #e4e1e8;"></div>
  <div class="abs" style="left:219.5px;top:19px;width:44px;height:19px;border-left:1px solid #e4e1e8;border-right:1px solid #e4e1e8;border-bottom:1px solid #e4e1e8;"></div>
  <div class="abs" style="left:183px;top:23px;width:9px;height:9px;background:#c2c2c6;border:1px solid #9a9a9e;"></div>
  <div class="abs" style="left:227px;top:22.5px;width:11px;height:11px;background:#fff;border:1px solid #8a8a8a;"></div>
  <svg class="abs" style="left:226px;top:18.5px" width="18" height="18" viewBox="0 0 18 18"><path d="M3,9.5 L6.5,13.5 L15.5,3.5" stroke="#111" stroke-width="2.4" fill="none"/></svg>
 </div>
 <div class="btn" style="left:231px;top:122px;width:65px;height:17px;line-height:20px;text-align:left;"><span style="margin-left:9px;letter-spacing:0.5px">细节</span><span style="letter-spacing:3.2px;margin-left:1px">...</span></div>
 <div class="abs" style="left:23px;top:141.5px;line-height:14px;z-index:3;">截平面控制</div>
 <div class="dd" style="top:153px;"><span style="margin-left:4.5px">垂直于轨迹</span><i></i></div>
 <div class="abs" style="left:23px;top:176.5px;line-height:14px;letter-spacing:0.2px;z-index:3;">水平/竖直控制</div>
 <div class="dd" style="top:188px;"><span style="margin-left:4.5px">垂直于曲面</span><i></i></div>
 <div class="btn" style="left:231px;top:188px;width:53px;height:17px;line-height:19px;text-align:left;"><span style="margin-left:5px">下一个</span></div>
</div>

<svg id="vtb" width="420" height="29" viewBox="600.5 96.5 420 29">
<rect x="601" y="97.3" width="419" height="27.2" fill="#fcfcfc"/>
<rect x="601" y="97.3" width="5.4" height="27.2" fill="#ececec"/><rect x="1014.6" y="97.3" width="5.4" height="27.2" fill="#eef0f3"/>
<defs><linearGradient id="gPr9" x1="0" y1="0" x2="0" y2="1"><stop offset="0" stop-color="#c9c9c9"/><stop offset="0.15" stop-color="#dedede"/><stop offset="1" stop-color="#ececec"/></linearGradient></defs>
<rect x="853.8" y="99.2" width="24.6" height="23.2" fill="url(#gPr9)" stroke="#bdbdbd" stroke-width="1"/><path d="M853.8,99.2 H878.4" stroke="#9e9e9e" stroke-width="1.2"/>
<defs><linearGradient id="gPr10" x1="0" y1="0" x2="0" y2="1"><stop offset="0" stop-color="#c9c9c9"/><stop offset="0.15" stop-color="#dedede"/><stop offset="1" stop-color="#ececec"/></linearGradient></defs>
<rect x="881.2" y="99.2" width="24.2" height="23.2" fill="url(#gPr10)" stroke="#bdbdbd" stroke-width="1"/><path d="M881.2,99.2 H905.4" stroke="#9e9e9e" stroke-width="1.2"/>
<path d="M606.4,97.3 V124.5" stroke="#d3d8de" stroke-width="1"/>
<path d="M633.5,97.3 V124.5" stroke="#d3d8de" stroke-width="1"/>
<path d="M660.5,97.3 V124.5" stroke="#d3d8de" stroke-width="1"/>
<path d="M687.4,97.3 V124.5" stroke="#d3d8de" stroke-width="1"/>
<path d="M714.6,97.3 V124.5" stroke="#d3d8de" stroke-width="1"/>
<path d="M742.4,97.3 V124.5" stroke="#d3d8de" stroke-width="1"/>
<path d="M770.3,97.3 V124.5" stroke="#d3d8de" stroke-width="1"/>
<path d="M797.6,97.3 V124.5" stroke="#d3d8de" stroke-width="1"/>
<path d="M824.7,97.3 V124.5" stroke="#d3d8de" stroke-width="1"/>
<path d="M852.4,97.3 V124.5" stroke="#d3d8de" stroke-width="1"/>
<path d="M879.8,97.3 V124.5" stroke="#d3d8de" stroke-width="1"/>
<path d="M906.8,97.3 V124.5" stroke="#d3d8de" stroke-width="1"/>
<path d="M933.6,97.3 V124.5" stroke="#d3d8de" stroke-width="1"/>
<path d="M960.6,97.3 V124.5" stroke="#d3d8de" stroke-width="1"/>
<path d="M987.5,97.3 V124.5" stroke="#d3d8de" stroke-width="1"/>
<path d="M1014.6,97.3 V124.5" stroke="#d3d8de" stroke-width="1"/>
<rect x="601" y="97.3" width="419" height="27.2" fill="none" stroke="#ccd1d7" stroke-width="1"/>
<rect x="612.6" y="103.6" width="12.4" height="12.6" fill="#fdfdfd" stroke="#1c3562" stroke-width="1.5"/><rect x="612" y="103" width="13.6" height="2.2" fill="#16294f"/><circle cx="619.6" cy="110.4" r="4.1" fill="#f6f6f6" stroke="#4a4a4a" stroke-width="1.2"/><path d="M622.6,113.6 L627.4,118.3" stroke="#6e4a3a" stroke-width="2" stroke-linecap="round"/>
<circle cx="645" cy="109.2" r="5.3" fill="#fdfdfd" stroke="#5a5a5a" stroke-width="1.2"/><path d="M642,109.2 h6 M645,106.2 v6" stroke="#111" stroke-width="2"/><path d="M649,113.3 L654,118" stroke="#6e5a4a" stroke-width="2" stroke-linecap="round"/>
<circle cx="672" cy="109" r="5.3" fill="#fdfdfd" stroke="#6a6a6a" stroke-width="1.2"/><path d="M669,109 h6" stroke="#111" stroke-width="2"/><path d="M676,113.2 L681,118" stroke="#6e5a4a" stroke-width="2" stroke-linecap="round"/>
<defs><linearGradient id="gRp" x1="0" y1="0" x2="1" y2="1"><stop offset="0" stop-color="#ffffff"/><stop offset="0.5" stop-color="#dfe8f8"/><stop offset="1" stop-color="#5f7fc4"/></linearGradient></defs><rect x="694.3" y="104.6" width="13.4" height="13.6" rx="1" fill="url(#gRp)" stroke="#1c3562" stroke-width="1.5"/><path d="M699,118 C699.5,113.5 702.5,111 707,110" stroke="#142850" stroke-width="1.8" fill="none"/><path d="M699.2,113.5 L703,108.5" stroke="#fff" stroke-width="1.6" stroke-dasharray="1.2 1.2"/>
<path d="M721,108.6 L724,105 H735 V114.5 L731.8,117.8 H721 Z" fill="#6fd0d2"/><path d="M721,108.6 L724,105 H735 L731.8,108.6 Z" fill="#8fe4e6"/><path d="M731.8,108.6 L735,105 V114.5 L731.8,117.8 Z" fill="#2e8e90"/><rect x="721" y="108.6" width="10.8" height="9.2" fill="#fbffff" stroke="#7e9a9c" stroke-width="0.9"/><path d="M739.3,118 V121 H736.3 Z" fill="#5a5a5a"/>
<path d="M753,106.2 H751 L748.4,109 V116.4 H757.5 L760.4,113.4 V112.4" fill="none" stroke="#6c8284" stroke-width="1.1"/><path d="M757.2,116.6 L760.6,113 L760.6,111.8 L757,111.8 Z" fill="#3a9c9e"/><text x="753.6" y="110.9" font-family="'Liberation Sans',sans-serif" font-size="8.6" font-weight="bold" fill="#1c1c1c" textLength="9.8" lengthAdjust="spacingAndGlyphs">AB</text><path d="M767,118 V121 H764 Z" fill="#5a5a5a"/>
<rect x="776.5" y="103.4" width="12" height="14" fill="#fdfdfd" stroke="#6a6a6a" stroke-width="1"/><path d="M778.7,105.5 v10" stroke="#555" stroke-width="1.1" stroke-dasharray="1.3 1.6"/><path d="M780.5,105.5 h7" stroke="#bbb" stroke-width="0.8"/><rect x="778.8" y="110.6" width="13.2" height="7.8" rx="1" fill="#4a4a4a"/><rect x="782.6" y="109.2" width="5.6" height="2.4" fill="#4a4a4a"/><circle cx="785.4" cy="114.4" r="2.9" fill="#e9e9e9" stroke="#111" stroke-width="1"/><rect x="784.2" y="113.2" width="2.4" height="2.4" fill="#fff"/>
<path d="M803.2,110.4 L806.4,107 H814.4 V115.2 L811.4,118.6 H803.2 Z" fill="#e9f8f9" stroke="#8aa" stroke-width="0.7"/><path d="M803.2,110.4 L806.4,107 H814.4 L811.4,110.4 Z" fill="#8fe0e3"/><path d="M811.4,110.4 L814.4,107 V115.2 L811.4,118.6 Z" fill="#3a9a9c"/><path d="M808.5,102.6 V108 M806,105.6 L808.5,108.4 L811,105.6" stroke="#111" stroke-width="1.4" fill="none"/><path d="M819.2,113.3 H813.4 M816,110.8 L813.2,113.3 L816,115.8" stroke="#111" stroke-width="1.4" fill="none"/>
<path d="M830.6,104.2 l4.2,4.2 m0,-4.2 l-4.2,4.2" stroke="#8a5228" stroke-width="1.2"/><path d="M840.6,103 L833.2,118.2" stroke="#6a3a1e" stroke-width="1.7" stroke-dasharray="2.6 2"/><path d="M839.4,109.6 l6.6,9 M846.2,109.8 l-6.8,8.6 M838.6,114.2 h8" stroke="#9a5626" stroke-width="1.4"/><path d="M849,118 V121 H846 Z" fill="#5a5a5a"/>
<path d="M861.4,106.3 H872.4 L869.2,115.4 H858.4 Z" fill="none" stroke="#8a4a26" stroke-width="1.7"/><ellipse cx="868.7" cy="116" rx="5.8" ry="3.1" fill="#909291"/><ellipse cx="868.7" cy="115.8" rx="2.6" ry="2.3" fill="#6e706f"/><path d="M862.1,116.4 h2.4 M872.9000000000001,116.4 h2.4" stroke="#333" stroke-width="0.9"/><path d="M864.5,116.4 h1.3 M871.6,116.4 h1.3" stroke="#f4f4f4" stroke-width="0.9"/>
<path d="M895.3,103 L887,118" stroke="#7a3e20" stroke-width="1.8" stroke-dasharray="3.6 1.8"/><ellipse cx="896.4" cy="116" rx="5.8" ry="3.1" fill="#909291"/><ellipse cx="896.4" cy="115.8" rx="2.6" ry="2.3" fill="#6e706f"/><path d="M889.8,116.4 h2.4 M900.6,116.4 h2.4" stroke="#333" stroke-width="0.9"/><path d="M892.1999999999999,116.4 h1.3 M899.3,116.4 h1.3" stroke="#f4f4f4" stroke-width="0.9"/>
<path d="M915.2,103.6 l4.4,4.4 m0,-4.4 l-4.4,4.4 M922.4,106.4 l4.4,4.4 m0,-4.4 l-4.4,4.4 M912.2,111.4 l4.4,4.4 m0,-4.4 l-4.4,4.4" stroke="#9a5626" stroke-width="1.4"/><ellipse cx="923" cy="116" rx="5.8" ry="3.1" fill="#909291"/><ellipse cx="923" cy="115.8" rx="2.6" ry="2.3" fill="#6e706f"/><path d="M916.4,116.4 h2.4 M927.2,116.4 h2.4" stroke="#333" stroke-width="0.9"/><path d="M918.8,116.4 h1.3 M925.9,116.4 h1.3" stroke="#f4f4f4" stroke-width="0.9"/>
<path d="M939.4,103.6 l3,3 m0,-3 l-3,3 M951.4,107.6 l3.2,3.2 m0,-3.2 l-3.2,3.2" stroke="#7a7a7a" stroke-width="1"/><path d="M939.4,113.8 h3 l-3,3.4 h3" stroke="#6a6a6a" stroke-width="0.9" fill="none"/><path d="M949.6,103 L943.6,117.4 M939,110.4 H952 M940.6,105.6 L950.8,115.4" stroke="#9a5626" stroke-width="1.4"/><ellipse cx="950" cy="116" rx="5.8" ry="3.1" fill="#909291"/><ellipse cx="950" cy="115.8" rx="2.6" ry="2.3" fill="#6e706f"/><path d="M943.4,116.4 h2.4 M954.2,116.4 h2.4" stroke="#333" stroke-width="0.9"/><path d="M945.8,116.4 h1.3 M952.9,116.4 h1.3" stroke="#f4f4f4" stroke-width="0.9"/>
<rect x="966.2" y="103.2" width="8.6" height="4.2" fill="#f2ee86" stroke="#7a7a2a" stroke-width="0.9"/><path d="M975.2,105.9 H979.8 L975.6,112 " stroke="#222" stroke-width="1.2" fill="none"/><path d="M975.2,112 h4" stroke="#222" stroke-width="1"/><ellipse cx="977" cy="116" rx="5.8" ry="3.1" fill="#909291"/><ellipse cx="977" cy="115.8" rx="2.6" ry="2.3" fill="#6e706f"/><path d="M970.4,116.4 h2.4 M981.2,116.4 h2.4" stroke="#333" stroke-width="0.9"/><path d="M972.8,116.4 h1.3 M979.9,116.4 h1.3" stroke="#f4f4f4" stroke-width="0.9"/>
<path d="M995.6,105.5 L999.2,110.6 L995.6,116.1 M999.2,110.6 L1006.4,110.3" stroke="#34566a" stroke-width="1.1" fill="none"/><circle cx="995.6" cy="105.5" r="2.6" fill="#1fae3c" stroke="#0c6a22" stroke-width="0.6"/><circle cx="995.6" cy="116.1" r="2.6" fill="#27d2c8" stroke="#108a84" stroke-width="0.6"/><circle cx="1006.4" cy="110.3" r="2.6" fill="#c4121a" stroke="#7a0a10" stroke-width="0.6"/>
</svg>

<!-- ============ watermark ============ -->
<div class="abs" style="left:868px;top:620px;width:216px;height:72px;background:#fafbfc;"></div>
<svg class="abs" style="left:866px;top:620px" width="80" height="72" viewBox="866 620 80 72">
 <g transform="rotate(-14 894 665.5)"><ellipse cx="894" cy="665.5" rx="13.5" ry="6.6" fill="none" stroke="#dfe2e6" stroke-width="1.7"/></g>
 <g transform="rotate(38 895 646)"><path fill="#b7c7d7" fill-rule="evenodd" d="M873.5,646 a21.5,12.6 0 1,0 43,0 a21.5,12.6 0 1,0 -43,0 Z M877.6,646.6 a19.4,9.6 0 1,0 38.8,0 a19.4,9.6 0 1,0 -38.8,0 Z"/></g>
 <g transform="rotate(-58 917.5 664.5)"><path fill="#f2a7ab" fill-rule="evenodd" d="M897,664.5 a20.5,11.2 0 1,0 41,0 a20.5,11.2 0 1,0 -41,0 Z M898.2,663.2 a19,8.4 0 1,0 38,0 a19,8.4 0 1,0 -38,0 Z"/></g>
</svg>
<div class="abs" style="left:942px;top:628.5px;font-family:'Liberation Serif','Noto Serif CJK SC',serif;font-weight:900;font-size:29px;line-height:36px;color:#9fdcc0;letter-spacing:0.6px;white-space:nowrap;">野火论坛</div>
<div class="abs" style="left:931px;top:662.5px;font-family:'Liberation Sans',sans-serif;font-size:16.3px;line-height:22px;color:#cfe2e6;white-space:nowrap;">www.proewildfire.cn</div>
</div></body></html>
